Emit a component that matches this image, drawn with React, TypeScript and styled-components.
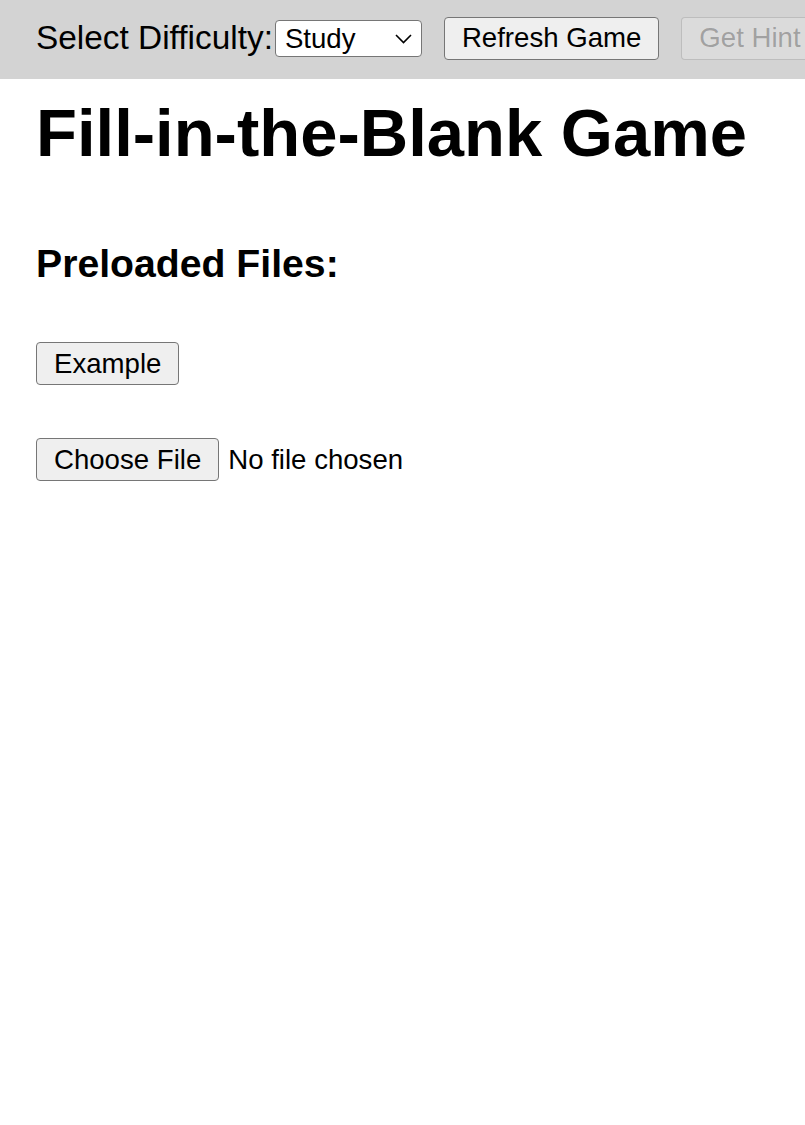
import { useState } from "react";
import styled, { createGlobalStyle } from "styled-components";

const GlobalStyle = createGlobalStyle`
  html, body {
    margin: 0;
    padding: 0;
    background: #ffffff;
    font-family: "Liberation Sans", Arial, sans-serif;
    color: #000000;
  }
`;

const Toolbar = styled.header`
  display: flex;
  align-items: center;
  height: 79px;
  box-sizing: border-box;
  padding: 0 0 3px 36px;
  background-color: #d3d3d3;
  white-space: nowrap;
  overflow: hidden;
`;

const Label = styled.label`
  font-size: 33.4px;
  margin-right: 2px;
`;

const SelectWrap = styled.div`
  position: relative;
  display: inline-flex;
  margin-right: 22px;
`;

const Select = styled.select`
  appearance: none;
  width: 147px;
  height: 37px;
  padding: 0 30px 0 9px;
  font-family: "Liberation Sans", Arial, sans-serif;
  font-size: 27.6px;
  color: #000;
  background: #ffffff;
  border: 1.5px solid #767676;
  border-radius: 4px;
`;

const Chevron = styled.svg`
  position: absolute;
  right: 10px;
  top: 14px;
  pointer-events: none;
`;

const Button = styled.button<{ $gap?: number }>`
  flex-shrink: 0;
  height: 43px;
  padding: 0 17px;
  margin-right: ${(p) => p.$gap ?? 0}px;
  font-family: "Liberation Sans", Arial, sans-serif;
  font-size: 27.6px;
  color: #000;
  background: #efefef;
  border: 1.5px solid #767676;
  border-radius: 4px;

  &:disabled {
    color: rgba(16, 16, 16, 0.3);
    background: rgba(239, 239, 239, 0.3);
    border-color: rgba(118, 118, 118, 0.3);
  }
`;

const Main = styled.main`
  display: flex;
  flex-direction: column;
  align-items: flex-start;
  padding-left: 36px;
`;

const Title = styled.h1`
  margin: 15px 0 0;
  font-size: 67px;
  line-height: 77px;
  font-weight: bold;
`;

const SubTitle = styled.h3`
  margin: 70px 0 0;
  font-size: 39.2px;
  line-height: 45px;
  font-weight: bold;
`;

const PreloadButton = styled(Button)`
  margin-top: 56px;
`;

const FileInput = styled.input`
  margin-top: 53px;
  width: 368px;
  font-family: "Liberation Sans", Arial, sans-serif;
  font-size: 27.6px;
  color: #000;
  overflow: hidden;

  &::file-selector-button {
    height: 43px;
    padding: 0 17px;
    margin-right: 9px;
    font-family: "Liberation Sans", Arial, sans-serif;
    font-size: 27.6px;
    color: #000;
    background: #efefef;
    border: 1.5px solid #767676;
    border-radius: 4px;
  }
`;

const App = () => {
  const [difficulty, setDifficulty] = useState("study");

  return (
    <>
      <GlobalStyle />
      <Toolbar>
        <Label htmlFor="difficulty">Select Difficulty:</Label>
        <SelectWrap>
          <Select
            id="difficulty"
            value={difficulty}
            onChange={(e) => setDifficulty(e.target.value)}
          >
            <option value="study">Study</option>
            <option value="easy">Easy</option>
            <option value="medium">Medium</option>
            <option value="hard">Hard</option>
          </Select>
          <Chevron width="17" height="10" viewBox="0 0 17 10">
            <path d="M1 1 L8.5 8.5 L16 1" fill="none" stroke="#000" strokeWidth="1.6" />
          </Chevron>
        </SelectWrap>
        <Button $gap={22}>Refresh Game</Button>
        <Button disabled>Get Hint</Button>
      </Toolbar>
      <Main>
        <Title>Fill-in-the-Blank Game</Title>
        <SubTitle>Preloaded Files:</SubTitle>
        <PreloadButton>Example</PreloadButton>
        <FileInput type="file" />
      </Main>
    </>
  );
};

export default App;
